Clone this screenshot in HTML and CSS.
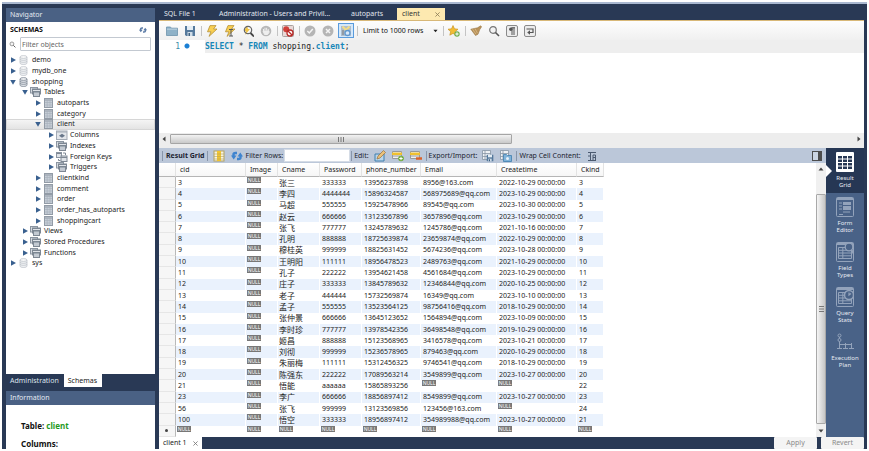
FILE: index.html
```html
<!DOCTYPE html>
<html lang="en">
<head>
  <meta charset="UTF-8" />
  <meta name="viewport" content="width=device-width, initial-scale=1.0"/>
  <title>SQL Workbench</title>
  <link rel="stylesheet" href="styles.css">
</head>
<body>

<svg class="defs" aria-hidden="true">
  <symbol id="right" viewBox="0 0 6 6"><path d="M1 0.3L6 3L1 5.7z" fill="#39608f"/></symbol>
  <symbol id="down" viewBox="0 0 6 6"><path d="M0.2 1L5.8 1L3 5.8z" fill="#39608f"/></symbol>
  <symbol id="db" viewBox="0 0 12 10">
    <path d="M2 2v6c0 2 7 2 7 0V2" fill="#eef0f2" stroke="#b9bec5" stroke-width=".7"/>
    <ellipse cx="5.5" cy="2" rx="3.5" ry="1.4" fill="#fafafa" stroke="#b9bec5" stroke-width=".7"/>
    <path d="M2 4c0 1.800 7 1.800 7 0M2 6c0 1.800 7 1.800 7 0" fill="none" stroke="#b9bec5" stroke-width=".7"/>
  </symbol>
  <symbol id="db-on" viewBox="0 0 12 10">
    <path d="M2 2v6c0 2 7 2 7 0V2" fill="#dde1e6" stroke="#7f8894" stroke-width=".8"/>
    <ellipse cx="5.500" cy="2" rx="3.5" ry="1.4" fill="#f1f3f5" stroke="#7f8894" stroke-width=".8"/>
    <path d="M2 4c0 1.800 7 1.800 7 0M2 6c0 1.800 7 1.800 7 0" fill="none" stroke="#7f8894" stroke-width=".8"/>
  </symbol>
  <symbol id="stack" viewBox="0 0 12 10">
    <rect x=".5" y=".5" width="7" height="5.500" fill="#d5dae0" stroke="#8b95a1"/>
    <rect x="2.500" y="2" width="8" height="5" fill="#dfe3e8" stroke="#7d8793"/>
    <rect x="3.500" y="4.500" width="6" height="5" fill="#c3cad2" stroke="#7d8793"/>
    <path d="M2 2.500h9M3 5h7" stroke="#7d8793"/>
  </symbol>
  <symbol id="tbl" viewBox="0 0 12 10">
    <rect x="1.500" y=".5" width="8" height="9" fill="#c6cdd6" stroke="#929ba6"/>
    <path d="M1 2h9" stroke="#929ba6"/>
    <path d="M4.200 2v7M7 2v7M2 4.500h7M2 7h7" stroke="#a5aeb9" stroke-width=".6"/>
  </symbol>
  <symbol id="cols" viewBox="0 0 12 10">
    <rect x=".5" y="1" width="10.500" height="8.500" fill="#e3e6ea" stroke="#a4abb5"/>
    <path d="M.5 2h10.500" stroke="#a4abb5"/>
    <path d="M3 5.800L6 3.800v4zM9 5.800L6 3.800v4z" fill="#69778a"/>
  </symbol>
  <symbol id="keys" viewBox="0 0 12 10">
    <rect x=".5" y=".5" width="5" height="5" fill="#dfe3e8" stroke="#8b95a1"/>
    <rect x="5" y="4" width="6" height="5.500" fill="#dfe3e8" stroke="#7d8793"/>
    <path d="M.5 1.500h5M5 5.500h6M7 1h2.500v2M2.500 7v1.500h2" fill="none" stroke="#7d8793"/>
  </symbol>
  <symbol id="lens" viewBox="0 0 12 12">
    <circle cx="5" cy="5" r="3.300" fill="#f3f3f3" stroke="#777" stroke-width="1.200"/>
    <path d="M7.500 7.500L11 11" stroke="#555" stroke-width="1.600"/>
  </symbol>
  <symbol id="sync" viewBox="0 0 12 12">
    <path d="M2.500 7V4.500Q2.500 3 4.500 3H6M9.500 5v2.500Q9.500 9 7.500 9H6" fill="none" stroke="currentColor" stroke-width="2.400"/>
    <path d="M0 5.500h5.500L2.700 9.500zM6.500 6.500H12L9.300 2.500z" fill="currentColor"/>
  </symbol>
  <symbol id="bolt" viewBox="0 0 12 12">
    <path d="M4 .6h6L7.500 4H11L3 11.400L5 6.800H1.500z" fill="#f8cf52" stroke="#b59037" stroke-width=".8"/>
  </symbol>
  <symbol id="disk" viewBox="0 0 12 12">
    <path d="M1 1h10v10H2.200L1 10z" fill="#55799c"/>
    <path d="M3 1h6v4H3z" fill="#e4edf4"/><path d="M3.500 7h5v4h-5z" fill="#cfdce7"/><path d="M4.500 8h1.500v3H4.500z" fill="#41617f"/>
  </symbol>
  <symbol id="grid" viewBox="0 0 18 20">
    <rect x=".5" y=".5" width="17" height="19" rx="1" fill="none" stroke="currentColor"/>
    <path d="M1 2h16" stroke="currentColor" stroke-width="2"/>
    <path d="M2.500 5.500h13v11h-13zM2.500 8.300h13M2.500 11h13M2.500 13.800h13M6.800 5.500v11" fill="none" stroke="currentColor"/>
  </symbol>
</svg>

<div class="app">
  <aside class="sidebar">
    <section class="navigator">
      <h2 class="panel-title">Navigator</h2>
      <div class="schemas-head">
        <span>SCHEMAS</span>
        <button class="sync" aria-label="Refresh schemas"><svg><use href="#sync"/></svg></button>
      </div>
      <label class="filter">
        <svg><use href="#lens"/></svg>
        <input type="text" placeholder="Filter objects" aria-label="Filter objects">
      </label>
      <div class="tree-area">
        <ul class="tree">
          <li><svg class="arrow"><use href="#right"/></svg><svg class="node"><use href="#db"/></svg>demo</li>
          <li><svg class="arrow"><use href="#right"/></svg><svg class="node"><use href="#db"/></svg>mydb_one</li>
          <li><svg class="arrow"><use href="#down"/></svg><svg class="node"><use href="#db-on"/></svg>shopping</li>
          <li class="l1"><svg class="arrow"><use href="#down"/></svg><svg class="node"><use href="#stack"/></svg>Tables</li>
          <li class="l2"><svg class="arrow"><use href="#right"/></svg><svg class="node"><use href="#tbl"/></svg>autoparts</li>
          <li class="l2"><svg class="arrow"><use href="#right"/></svg><svg class="node"><use href="#tbl"/></svg>category</li>
          <li class="l2 selected"><svg class="arrow"><use href="#down"/></svg><svg class="node"><use href="#tbl"/></svg>client</li>
          <li class="l3"><svg class="arrow"><use href="#right"/></svg><svg class="node"><use href="#cols"/></svg>Columns</li>
          <li class="l3"><svg class="arrow"><use href="#right"/></svg><svg class="node"><use href="#stack"/></svg>Indexes</li>
          <li class="l3"><svg class="arrow"><use href="#right"/></svg><svg class="node"><use href="#keys"/></svg>Foreign Keys</li>
          <li class="l3"><svg class="arrow"><use href="#right"/></svg><svg class="node"><use href="#stack"/></svg>Triggers</li>
          <li class="l2"><svg class="arrow"><use href="#right"/></svg><svg class="node"><use href="#tbl"/></svg>clientkind</li>
          <li class="l2"><svg class="arrow"><use href="#right"/></svg><svg class="node"><use href="#tbl"/></svg>comment</li>
          <li class="l2"><svg class="arrow"><use href="#right"/></svg><svg class="node"><use href="#tbl"/></svg>order</li>
          <li class="l2"><svg class="arrow"><use href="#right"/></svg><svg class="node"><use href="#tbl"/></svg>order_has_autoparts</li>
          <li class="l2"><svg class="arrow"><use href="#right"/></svg><svg class="node"><use href="#tbl"/></svg>shoppingcart</li>
          <li class="l1"><svg class="arrow"><use href="#right"/></svg><svg class="node"><use href="#stack"/></svg>Views</li>
          <li class="l1"><svg class="arrow"><use href="#right"/></svg><svg class="node"><use href="#stack"/></svg>Stored Procedures</li>
          <li class="l1"><svg class="arrow"><use href="#right"/></svg><svg class="node"><use href="#stack"/></svg>Functions</li>
          <li><svg class="arrow"><use href="#right"/></svg><svg class="node"><use href="#db"/></svg>sys</li>
        </ul>
      </div>
    </section>
    <div class="side-tabs">
      <button>Administration</button>
      <button class="active">Schemas</button>
    </div>
    <section class="information">
      <h2 class="panel-title">Information</h2>
      <div class="info-body">
        <p>Table: <span class="green">client</span></p>
        <p>Columns:</p>
      </div>
    </section>
  </aside>

  <main class="main">
    <nav class="file-tabs">
      <button class="tab-sql">SQL File 1</button>
      <button class="tab-admin">Administration - Users and Privil...</button>
      <button class="tab-auto">autoparts</button>
      <button class="tab-client active">client <svg class="close" viewBox="0 0 6 6"><path d="M.5 .5l5 5M5.500 .5l-5 5" stroke="#8d7d57"/></svg></button>
    </nav>

    <div class="toolbar">
      <button aria-label="Open"><svg viewBox="0 0 12 12"><path d="M.5 2h4l1 1.200h6v7.300H.5z" fill="#8fb2c8" stroke="#6d93ac" stroke-width=".8"/><path d="M1 4.200h10" stroke="#bdd3e0"/></svg></button>
      <button aria-label="Save"><svg><use href="#disk"/></svg></button>
      <i class="sep"></i>
      <button aria-label="Execute"><svg><use href="#bolt"/></svg></button>
      <button aria-label="Execute current"><svg viewBox="0 0 12 12"><use href="#bolt" width="12" height="12"/><path d="M5 4.500h4M7 4.500v6.500M5 11h4" stroke="#555"/></svg></button>
      <button aria-label="Explain"><svg viewBox="0 0 12 12"><path d="M5 .5L2 6h2l-1 4 5-6H6z" fill="#f0c548"/><circle cx="6" cy="5" r="3.700" fill="none" stroke="#666" stroke-width="1.200"/><path d="M8.500 8L12 11.500" stroke="#444" stroke-width="1.800"/></svg></button>
      <button aria-label="Stop"><svg viewBox="0 0 12 12"><circle cx="6" cy="6" r="5.300" fill="#b8b8b8"/><path d="M3.500 6.500V4M5 5.500V2.800M6.600 5.500V2.800M8.200 6V4M3 6h6v1.500L7.500 9.500h-3z" fill="#eee" stroke="#eee"/></svg></button>
      <i class="sep"></i>
      <button aria-label="Stop on error"><svg viewBox="0 0 12 12"><rect x=".5" y=".5" width="11" height="11" rx="1" fill="#e9d9d7" stroke="#a9a09e"/><circle cx="4.200" cy="4.200" r="3" fill="#d0403a"/><circle cx="8" cy="8" r="3" fill="#fff" stroke="#b92b28" stroke-width="1.300"/><path d="M6 6l4 4" stroke="#b92b28" stroke-width="1.300"/></svg></button>
      <i class="sep"></i>
      <button aria-label="Commit"><svg viewBox="0 0 12 12"><circle cx="6" cy="6" r="5.500" fill="#b5b5b5"/><path d="M3.300 6l2 2 3.500-4" fill="none" stroke="#f4f4f4" stroke-width="1.500"/></svg></button>
      <button aria-label="Rollback"><svg viewBox="0 0 12 12"><circle cx="6" cy="6" r="5.500" fill="#b5b5b5"/><path d="M4 4l4 4M8 4l-4 4" stroke="#f4f4f4" stroke-width="1.500"/></svg></button>
      <button class="pressed" aria-label="Auto commit"><svg viewBox="0 0 12 12"><rect x="1" y="1" width="10" height="10" fill="#aebdcc"/><path d="M2.500 1.500l3.500 3.500 3.500-3.500" fill="none" stroke="#f2dc86" stroke-width="2"/><path d="M3 5v5" stroke="#8a8f96" stroke-width="1.500"/><circle cx="7.500" cy="8" r="2.500" fill="#d9e8f7" stroke="#5f97cf" stroke-width="1.300"/></svg></button>
      <i class="sep"></i>
      <label class="limit">
        <select aria-label="Row limit"><option>Limit to 1000 rows</option></select>
        <svg viewBox="0 0 6 4"><path d="M.5 .5h5L3 3.500z" fill="#222"/></svg>
      </label>
      <i class="sep"></i>
      <button aria-label="Add snippet"><svg viewBox="0 0 12 12"><path d="M5 .5l1.500 3.300 3.500.4-2.600 2.400.8 3.600L5 8.400 1.800 10.200l.8-3.600L0 4.200l3.500-.4z" fill="#f2bd35" stroke="#c48d1c" stroke-width=".6"/><circle cx="9" cy="9" r="2.700" fill="#6fae4d"/><path d="M7.300 9h3.400M9 7.300v3.400" stroke="#fff"/></svg></button>
      <i class="sep"></i>
      <button aria-label="Beautify"><svg viewBox="0 0 12 12"><path d="M.8 4.200l6.700-1.400 3.200-2 .9 1-1.800 2.700L8 9.200 5.500 10.500z" fill="#b9925a" stroke="#9a7848" stroke-width=".6"/><path d="M2.500 4.200l3.500 5M5 3.700l2.500 4.500" stroke="#dcc08e" stroke-width=".7"/></svg></button>
      <button aria-label="Find"><svg><use href="#lens"/></svg></button>
      <button aria-label="Invisible characters"><svg viewBox="0 0 12 12"><rect x=".5" y=".5" width="11" height="11" rx="1.500" fill="#ececec" stroke="#8a8a8a"/><path d="M6 2.500v7.500M8 2.500v7.500M9 2.800H5.500" stroke="#555"/><circle cx="4.800" cy="4.200" r="1.700" fill="#555"/></svg></button>
      <button aria-label="Wrap text"><svg viewBox="0 0 12 12"><rect x=".5" y=".5" width="11" height="11" rx="1.500" fill="#ececec" stroke="#8a8a8a"/><path d="M2.500 4h6.500v3.500H5" fill="none" stroke="#555" stroke-width="1.200"/><path d="M6 5.300v4.400L3.200 7.500z" fill="#555"/></svg></button>
    </div>

    <div class="editor">
      <div class="code-line">
        <span class="line-no">1</span><span class="bullet"></span>
        <code><b>SELECT</b> * <b>FROM</b> shopping.<b>client</b>;</code>
      </div>
    </div>
    <div class="hscroll">
      <svg viewBox="0 0 4 6"><path d="M3.500 .5v5L.5 3z" fill="#444"/></svg>
      <div class="track"><div class="thumb"><svg viewBox="0 0 6 5"><path d="M.5 0v5M3 0v5M5.500 0v5" stroke="#777"/></svg></div></div>
      <svg viewBox="0 0 4 6"><path d="M.5 .5v5L3.500 3z" fill="#444"/></svg>
    </div>

    <div class="result">
      <div class="result-left">
        <div class="result-bar">
          <i class="sep"></i>
          <strong>Result Grid</strong>
          <i class="sep"></i>
          <button aria-label="Columns"><svg viewBox="0 0 12 12"><rect x="1" y="1" width="10" height="10" fill="#f7f3df" stroke="#b3a262"/><rect x="4" y="1" width="4" height="10" fill="#f2c530"/><path d="M1 4h10M1 6.500h10M1 9h10" stroke="#b3a262" stroke-width=".6"/></svg></button>
          <button class="blue" aria-label="Refresh"><svg><use href="#sync"/></svg></button>
          <label for="rows">Filter Rows:</label>
          <input id="rows" type="text">
          <i class="sep"></i>
          <span>Edit:</span>
          <button aria-label="Edit row"><svg viewBox="0 0 12 12"><path d="M1 4h9v7H1z" fill="#b9d5ea" stroke="#3f7fae"/><path d="M3 9l1-3 5.500-5.500 2 2L6 8z" fill="#eac17a" stroke="#99703a" stroke-width=".7"/></svg></button>
          <button aria-label="Insert row"><svg viewBox="0 0 12 12"><path d="M.5 1.500h9v7h-9zM.5 6h9" fill="#f1f1f1" stroke="#999"/><path d="M0 3.800h10" stroke="#f0c02f" stroke-width="2.500"/><circle cx="9" cy="8.500" r="2.800" fill="#6eaa3d"/><path d="M7.300 8.500h3.400M9 6.800v3.400" stroke="#fff"/></svg></button>
          <button aria-label="Delete row"><svg viewBox="0 0 12 12"><path d="M.5 1.500h9v7h-9zM.5 6h9" fill="#f1f1f1" stroke="#999"/><path d="M0 3.800h10" stroke="#f0c02f" stroke-width="2.500"/><path d="M6 8.500h6" stroke="#d9622b" stroke-width="2.500"/></svg></button>
          <i class="sep"></i>
          <span>Export/Import:</span>
          <button aria-label="Export"><svg viewBox="0 0 12 12"><path d="M.5 .5h8v9h-8zM.5 3.500h8M.5 6.500h8M3 .5v9" fill="#eef1f4" stroke="#8796a5" stroke-width=".8"/><use href="#disk" x="4" y="4" width="8" height="8"/></svg></button>
          <button aria-label="Import"><svg viewBox="0 0 12 12"><path d="M.5 .5h8v9h-8zM.5 3.500h8M.5 6.500h8M3 .5v9" fill="#eef1f4" stroke="#8796a5" stroke-width=".8"/><path d="M3.500 4.500h3l1 1h4v6h-8z" fill="#7fb2d8" stroke="#3f7fae" stroke-width=".8"/><circle cx="7.500" cy="8.500" r="1.500" fill="#e8f2fa"/></svg></button>
          <i class="sep"></i>
          <span>Wrap Cell Content:</span>
          <button aria-label="Wrap cell content"><svg viewBox="0 0 12 12"><path d="M2 2.500h8M2 10.500h8M4.500 2v8M7 5l2.500 0v5M7 10V5M7 7.500h2.500M2 6h2" fill="none" stroke="#4b5a70"/></svg></button>
          <button class="dock" aria-label="Toggle side panel"><svg viewBox="0 0 12 12"><rect x="1.500" y="1.500" width="9" height="9" fill="#cbd5e2" stroke="#4d4d4d"/><path d="M7 1.500h4v9H7z" fill="#4d4d4d"/></svg></button>
        </div>
        <div class="grid-wrap">
          <table class="grid">
            <colgroup>
              <col class="c-mark"><col class="c-cid"><col class="c-image"><col class="c-name"><col class="c-pass">
              <col class="c-phone"><col class="c-email"><col class="c-time"><col class="c-kind">
            </colgroup>
            <thead>
              <tr><th></th><th>cid</th><th>Image</th><th>Cname</th><th>Password</th><th>phone_number</th><th>Email</th><th>Createtime</th><th>Ckind</th></tr>
            </thead>
            <tbody id="rows-body"></tbody>
          </table>
          <div class="vscroll">
            <svg viewBox="0 0 6 4"><path d="M.5 3.500h5L3 .5z" fill="#444"/></svg>
            <div class="track"><div class="thumb"><svg viewBox="0 0 5 6"><path d="M0 .5h5M0 3h5M0 5.500h5" stroke="#777"/></svg></div></div>
            <svg viewBox="0 0 6 4"><path d="M.5 .5h5L3 3.500z" fill="#444"/></svg>
          </div>
        </div>
      </div>

      <div class="views">
        <button class="active"><svg viewBox="0 0 18 20"><rect width="18" height="20" rx="1" fill="#fff"/><path d="M2 4h14v13H2z" fill="#263754"/><path d="M2 7h14M2 10.500h14M2 14h14M6.500 4v13M11.500 4v13" stroke="#fff"/></svg>Result<br>Grid</button>
        <button><svg viewBox="0 0 18 20"><rect x=".5" y=".5" width="17" height="19" rx="1" fill="none" stroke="#93a3bb"/><path d="M1 2h16" stroke="#93a3bb" stroke-width="2"/><path d="M3 6h3M3 9h3M3 12h3M7 15h7M3 17.500h4" stroke="#93a3bb"/><path d="M7 5h8v3H7zM7 9h8v4H7z" fill="#93a3bb"/></svg>Form<br>Editor</button>
        <button><svg viewBox="0 0 18 20"><use href="#grid" width="18" height="20"/><circle cx="13" cy="5" r="3.800" fill="#496287" stroke="#93a3bb" stroke-width="1.300"/><path d="M15.500 8L18 12" stroke="#93a3bb" stroke-width="2"/></svg>Field<br>Types</button>
        <button><svg viewBox="0 0 18 20"><use href="#grid" width="18" height="20"/><circle cx="13" cy="8" r="4.500" fill="#496287" stroke="#93a3bb" stroke-width="1.500"/><path d="M13 1v3M11 1.500h4M13 5.500V8l2-1.500" fill="none" stroke="#93a3bb" stroke-width="1.200"/></svg>Query<br>Stats</button>
        <button><svg viewBox="0 0 18 20"><g fill="none" stroke="#93a3bb"><circle cx="3.500" cy="3.500" r="1.500"/><circle cx="3.500" cy="8" r="1.500"/><path d="M3.500 5v1.500M3.500 9.500V16M1 16.500h5M7 16.500h5M13 16.500h5M3.500 12.500h12M9.500 11v5M15.500 11v5"/></g></svg>Execution<br>Plan</button>
      </div>
    </div>

    <footer class="bottom">
      <button class="result-tab">client 1 <svg class="close" viewBox="0 0 6 6"><path d="M.5 .5l5 5M5.500 .5l-5 5" stroke="#777"/></svg></button>
      <button class="action" disabled>Apply</button>
      <button class="action" disabled>Revert</button>
    </footer>
  </main>
</div>

<script>
  const NULL = null;

  // cid, Image, Cname, Password, phone_number, Email, Createtime, Ckind
  const rows = [
    ['3', NULL, '张三', '333333', '13956237898', '8956@163.com', '2022-10-29 00:00:00', '3'],
    ['4', NULL, '李四', '4444444', '15896324587', '568975689@qq.com', '2023-10-29 00:00:00', '4'],
    ['5', NULL, '马超', '555555', '15925478966', '89545@qq.com', '2023-10-30 00:00:00', '5'],
    ['6', NULL, '赵云', '666666', '13123567896', '3657896@qq.com', '2023-10-29 00:00:00', '6'],
    ['7', NULL, '张飞', '777777', '13245789632', '1245786@qq.com', '2021-10-16 00:00:00', '7'],
    ['8', NULL, '孔明', '888888', '18725639874', '23659874@qq.com', '2022-10-29 00:00:00', '8'],
    ['9', NULL, '穆桂英', '999999', '18825631452', '5674236@qq.com', '2023-10-28 00:00:00', '9'],
    ['10', NULL, '王明阳', '111111', '18956478523', '2489763@qq.com', '2021-10-29 00:00:00', '10'],
    ['11', NULL, '孔子', '222222', '13954621458', '4561684@qq.com', '2023-10-29 00:00:00', '11'],
    ['12', NULL, '庄子', '333333', '13845789632', '12346844@qq.com', '2020-10-25 00:00:00', '12'],
    ['13', NULL, '老子', '444444', '15732569874', '16349@qq.com', '2023-10-10 00:00:00', '13'],
    ['14', NULL, '孟子', '555555', '13523564125', '98756416@qq.com', '2018-10-29 00:00:00', '14'],
    ['15', NULL, '张仲景', '666666', '13645123652', '1564894@qq.com', '2023-10-09 00:00:00', '15'],
    ['16', NULL, '李时珍', '777777', '13978542356', '36498548@qq.com', '2019-10-29 00:00:00', '16'],
    ['17', NULL, '姬昌', '888888', '15123568965', '3416578@qq.com', '2023-10-21 00:00:00', '17'],
    ['18', NULL, '刘彻', '999999', '15236578965', '879463@qq.com', '2020-10-29 00:00:00', '18'],
    ['19', NULL, '朱丽梅', '111111', '15312456325', '9746541@qq.com', '2018-10-29 00:00:00', '19'],
    ['20', NULL, '陈强东', '222222', '17089563214', '3549899@qq.com', '2023-10-27 00:00:00', '20'],
    ['21', NULL, '悟能', 'aaaaaa', '15865893256', NULL, NULL, '22'],
    ['23', NULL, '李广', '666666', '18856897412', '8549899@qq.com', '2023-10-27 00:00:00', '23'],
    ['56', NULL, '张飞', '999999', '13123569856', '123456@163.com', NULL, '24'],
    ['100', NULL, '悟空', '333333', '18956897412', '354989988@qq.com', '2023-10-27 00:00:00', '21'],
    [NULL, NULL, NULL, NULL, NULL, NULL, NULL, NULL]
  ];

  const body = document.getElementById('rows-body');

  rows.forEach((row, i) => {
    const tr = document.createElement('tr');
    // the last row is the empty one for new records
    const isNew = i === rows.length - 1;
    tr.innerHTML = '<td class="mark">' + (isNew ? '<span class="dot"></span>' : '') + '</td>';

    row.forEach(val => {
      const td = document.createElement('td');
      if (val === NULL){
        td.className = 'empty';
        td.innerHTML = '<span class="null">NULL</span>';
      } else {
        td.innerText = val;
      }
      tr.appendChild(td);
    });
    body.appendChild(tr);
  });
</script>

</body>
</html>
```

FILE: styles.css
```css
*{box-sizing:border-box;}
body{
  margin:0;padding:2px;height:100vh;background:#fff;
  font:7px/10px "Noto Sans","Noto Sans CJK SC",sans-serif;
  color:#222;
}
button,input,select{font:inherit;color:inherit;border:none;padding:0;margin:0;background:none;}
button{cursor:pointer;}
svg{display:block;flex:none;}
.defs{position:absolute;width:0;height:0;}

.app{
  height:100%;display:flex;gap:4px;
  background:#293955;border-top:2px solid #a9b8d0;
  padding:4px 3px 0 4px;
}

/* left side */
.sidebar{width:149px;display:flex;flex-direction:column;flex:none;}
.navigator{flex:1;display:flex;flex-direction:column;background:#fff;min-height:0;}
.panel-title{
  margin:0;height:14px;line-height:14px;padding:0 3px 0 4px;
  font-size:7px;font-weight:normal;color:#e4e9f1;background:#4a6184;
  display:flex;align-items:center;gap:2px;
}
.panel-title::after{
  content:"";flex:1;height:4px;
  background:radial-gradient(circle,#7186a6 30%,transparent 40%) 0 0/2px 2px;
}
.schemas-head{
  display:flex;justify-content:space-between;align-items:center;
  padding:1px 8px 0 4px;height:14px;font-weight:bold;color:#111;
}
.sync{color:#5b7ba6;}
.sync svg{width:8px;height:8px;}
.filter{display:flex;align-items:center;gap:4px;padding:1px 4px 0 3px;}
.filter svg{width:7px;height:7px;}
.filter input{
  flex:1;min-width:0;height:14px;padding:0 1px;
  border:1px solid #c3c9d1;border-radius:1px;background:#fff;
}
.filter input::placeholder{color:#666;}
.tree-area{flex:1;min-height:0;padding-top:4px;}
.tree{list-style:none;margin:0;padding:0;height:67%;display:flex;flex-direction:column;}
.tree li{
  flex:1;display:flex;align-items:center;gap:2px;min-height:0;
  padding-left:4px;white-space:nowrap;
}
.tree .l1{padding-left:16px;}
.tree .l2{padding-left:29px;}
.tree .l3{padding-left:42px;}
.tree .selected{background:linear-gradient(#f6f6f6,#e2e2e2);box-shadow:inset 0 0 0 1px #d6d6d6;}
.arrow{width:6px;height:6px;}
.node{width:12px;height:10px;}
.side-tabs{display:flex;height:13px;margin-bottom:4px;}
.side-tabs button{color:#dde3ec;padding:0 5px 0 4px;}
.side-tabs .active{background:#fff;color:#222;}
.information{height:58px;background:#fff;flex:none;overflow:hidden;}
.info-body{padding:16px 15px 0;font-size:8px;font-weight:bold;color:#111;}
.info-body p{margin:0 0 8px;}
.green{color:#1f9a1f;}

/* right side */
.main{flex:1;min-width:0;display:flex;flex-direction:column;}
.file-tabs{display:flex;height:13px;border-bottom:1px solid #d8b878;color:#e1e6ee;}
.file-tabs button{text-align:left;padding:0 5px;white-space:nowrap;}
.tab-sql{width:55px;}
.tab-admin{width:132px;}
.tab-auto{width:51px;}
.file-tabs .active{
  width:48px;background:#fde9b0;color:#333;
  display:flex;justify-content:space-between;align-items:center;
}
.close{width:5px;height:5px;}

.toolbar{
  display:flex;align-items:center;height:19px;padding-left:4px;
  background:linear-gradient(#fdfdfd,#f0f0f0);
}
.toolbar button{width:18px;height:15px;display:flex;align-items:center;justify-content:center;}
.toolbar button svg{width:12px;height:12px;}
.toolbar .pressed{width:16px;margin:0 1px;background:#d5e8fa;border:1px solid #5a9bdc;}
.sep{width:1px;height:10px;background:#c4c4c4;margin:0 1px 0 2px;flex:none;}
.limit{display:flex;align-items:center;width:82px;padding:0 3px 0 4px;}
.limit select{appearance:none;flex:1;min-width:0;color:#111;}
.limit svg{width:5px;height:4px;}

.editor{flex:1;background:#fff;min-height:0;}
.code-line{
  display:flex;align-items:center;height:13px;background:#eee;
  font:8px/13px "DejaVu Sans Mono","Liberation Mono",monospace;
}
.line-no{width:21px;height:13px;text-align:right;color:#3a8aa8;background:#fff;}
.bullet{width:25px;height:13px;background:radial-gradient(circle at 7px 6px,#1b7fd4 2px,transparent 3px) #fff;}
.code-line code{font:inherit;color:#222;}
.code-line b{color:#1787b8;}

.hscroll{
  display:flex;align-items:center;gap:4px;height:15px;padding:0 3px 3px;
  background:#ededed;flex:none;
}
.hscroll > svg{width:4px;height:6px;}
.hscroll .track{flex:1;height:10px;}
.hscroll .thumb{
  width:50%;height:100%;border:1px solid #a5a5a5;border-radius:1px;
  background:linear-gradient(#f2f2f2,#c9c9c9);
  display:flex;align-items:center;justify-content:center;
}
.hscroll .thumb svg{width:6px;height:5px;}

.result{display:flex;height:289px;flex:none;}
.result-left{flex:1;min-width:0;display:flex;flex-direction:column;background:#fff;}
.result-bar{
  display:flex;align-items:center;height:15px;flex:none;padding-left:2px;
  background:#bbc7d9;white-space:nowrap;color:#1c2430;
}
.result-bar .sep{background:#8896ab;margin:0 2px 0 1px;}
.result-bar strong{padding:0 1px;}
.result-bar button{width:18px;display:flex;justify-content:center;}
.result-bar button svg{width:12px;height:12px;}
.result-bar label{padding-right:1px;}
.result-bar input{width:66px;height:13px;background:#fff;border:1px solid #d5dce6;}
.result-bar span{padding-right:2px;}
.result-bar .blue{color:#3f84cf;}
.result-bar .dock{margin-left:auto;}

.grid-wrap{flex:1;min-height:0;display:flex;justify-content:space-between;}
.grid{table-layout:fixed;border-collapse:separate;border-spacing:0;width:445px;height:100%;}
.c-mark{width:17px;}
.c-cid{width:70px;}
.c-image{width:32px;}
.c-name{width:42px;}
.c-pass{width:42px;}
.c-phone{width:59px;}
.c-email{width:76px;}
.c-time{width:80px;}
.c-kind{width:27px;}
.grid th{
  height:14px;padding:0 0 0 4px;text-align:left;font-weight:normal;
  line-height:12px;border-bottom:1px solid #b5b5b5;border-right:1px solid #e3e3e3;
  background:linear-gradient(#fff,#f6f6f6);white-space:nowrap;
}
.grid td{
  height:11px;padding:0 0 0 2px;line-height:10px;white-space:nowrap;
  border-right:1px solid #fff;
}
.grid td:nth-child(4){font-size:8px;padding-left:1px;}
.grid tbody tr:nth-child(even){background:#eaf2fd;}
.grid .mark{background:#f6f6f6;border-right:1px solid #b9b9b9;border-bottom:1px solid #e6e6e6;}
.grid .empty{vertical-align:top;padding:0 0 0 1px;}
.grid .null{
  display:block;width:14px;height:6px;background:#777;color:#fff;
  font-size:5px;line-height:6px;text-align:center;
}
.dot{display:block;width:3px;height:3px;margin-left:4px;border-radius:50%;background:#444;}

.vscroll{
  width:10px;display:flex;flex-direction:column;align-items:center;
  background:#f0f0f0;padding:4px 0;
}
.vscroll > svg{width:6px;height:4px;}
.vscroll .track{flex:1;width:10px;padding:23px 0 5px;}
.vscroll .thumb{
  height:100%;border:1px solid #a9a9a9;border-radius:1px;
  background:linear-gradient(90deg,#f5f5f5,#c6c6c6);
  display:flex;align-items:center;justify-content:center;
}
.vscroll .thumb svg{width:5px;height:6px;}

.views{width:38px;background:#496287;}
.views button{
  position:relative;width:100%;height:45px;
  display:block;text-align:center;color:#e6ebf2;font-size:6px;line-height:7px;
}
.views button svg{width:18px;height:20px;margin:0 auto 3px;color:#93a3bb;}
.views .active{background:#263754;}
/* pointer of the open view */
.views .active::before{
  content:"";position:absolute;left:0;top:17px;
  border:6px solid transparent;border-left-color:#fff;border-right:none;
}

.bottom{display:flex;height:12px;flex:none;gap:4px;}
.result-tab{
  width:43px;margin-right:auto;padding:0 4px;background:#fff;
  display:flex;align-items:center;justify-content:space-between;
}
.action{width:43px;background:#f4f4f4;border-radius:1px;color:#8a8a8a;}
```
